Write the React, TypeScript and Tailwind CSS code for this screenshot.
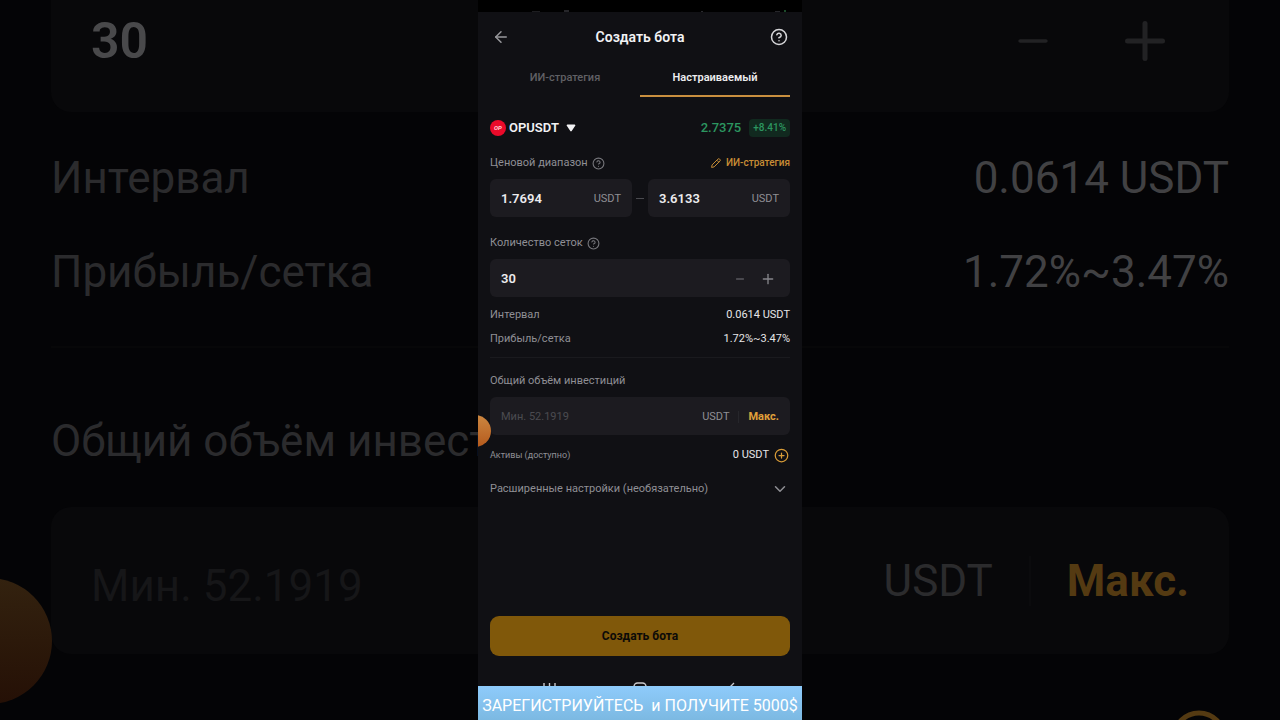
import { useState } from "react";
import type { ReactNode } from "react";
import {
  ArrowLeft,
  ChevronDown,
  CircleHelp,
  CirclePlus,
  Minus,
  Plus,
} from "lucide-react";

interface FieldProps {
  children: ReactNode;
}

const Field = ({ children }: FieldProps) => (
  <div className="flex h-[38px] min-w-0 flex-1 items-center rounded-md bg-[#1c1b20] px-[11px] pt-[2px]">
    {children}
  </div>
);

interface StatProps {
  label: string;
  value: string;
}

const Stat = ({ label, value }: StatProps) => (
  <div className="flex h-4 items-center justify-between">
    <dt className="text-[#8f8f94]">{label}</dt>
    <dd className="text-[#e6e6e8]">{value}</dd>
  </div>
);

const PencilIcon = () => (
  <svg viewBox="0 0 12 12" className="size-3" fill="none" stroke="currentColor">
    <path d="M1.6 10.4 2.1 7.9 7.9 2.1a1.2 1.2 0 0 1 1.7 0l.3.3a1.2 1.2 0 0 1 0 1.7L4.1 9.9Z" />
    <path d="m6.8 3.2 2 2" />
  </svg>
);

// Enlarged, dimmed copy of the form that fills the page behind the phone
const Backdrop = () => (
  <div
    aria-hidden="true"
    className="absolute inset-0 overflow-hidden px-[51px] text-[44px] leading-[56px] text-[#2b2b2d]"
  >
    <div className="flex h-[112px] items-center justify-between rounded-b-[20px] bg-[#08080a] px-10 pb-[30px]">
      <span className="text-[50px] font-semibold text-[#49494b]">30</span>
      <span className="flex items-center gap-[60px] pr-[14px] text-[#222224]">
        <Minus className="size-[44px]" strokeWidth={2} />
        <Plus className="size-[60px]" strokeWidth={2} />
      </span>
    </div>
    <div className="mt-[38px] flex justify-between">
      <span>Интервал</span>
      <span className="text-[#414143]">0.0614 USDT</span>
    </div>
    <div className="mt-[38px] flex justify-between">
      <span>Прибыль/сетка</span>
      <span className="text-[#414143]">1.72%~3.47%</span>
    </div>
    <div className="mt-[46px] h-[2px] bg-[#070708]" />
    <div className="mt-[65px]">Общий объём инвест</div>
    <div className="mt-[38px] flex h-[147px] items-center rounded-[20px] bg-[#08080a] px-10">
      <span className="flex-1 pt-[10px] text-[#161618]">Мин. 52.1919</span>
      <span>USDT</span>
      <span className="mx-9 h-[50px] w-[2px] bg-[#0b0b0d]" />
      <span className="font-bold text-[#543a12]">Макс.</span>
    </div>
    <div className="mt-[54px] flex justify-end">
      <CirclePlus className="size-[60px] text-[#543a12]" strokeWidth={2} />
    </div>
    <div className="absolute top-[578px] -left-[74px] size-[126px] rounded-full bg-linear-to-b from-[#33220f] to-[#251006]" />
  </div>
);

const StatusBar = () => (
  <div className="flex h-3 shrink-0 items-end bg-black">
    <svg viewBox="0 0 324 2" className="h-[2px] w-full">
      <rect x="54" y="1" width="8" height="1" fill="#1d1d20" />
      <rect x="86" y="0" width="5" height="2" fill="#26262a" />
      <rect x="223" y="1" width="2" height="1" fill="#2a2a2e" />
      <rect x="297" y="1" width="5" height="1" fill="#26262a" />
      <rect x="306" y="0" width="2" height="2" fill="#1c4a2a" />
    </svg>
  </div>
);

const SystemNav = () => (
  <div className="h-[30px] shrink-0 overflow-hidden pt-[26px] text-[#c9c9cc]">
    <svg
      viewBox="0 0 324 12"
      className="h-3 w-full"
      fill="none"
      stroke="currentColor"
      strokeWidth="1.4"
    >
      <path d="M66 1v10M71.500 1v10M77 1v10" />
      <rect x="156" y="1" width="12" height="11" rx="3.500" />
      <path d="m256 1-5 5 5 5" />
    </svg>
  </div>
);

const App = () => {
  const [lower, setLower] = useState("1.7694");
  const [upper, setUpper] = useState("3.6133");
  const [grids, setGrids] = useState("30");
  const [amount, setAmount] = useState("");

  const changeGrids = (step: number) => {
    setGrids(String(Math.max(2, Number(grids) + step)));
  };

  return (
    <div className="relative min-h-screen bg-[#040406] font-[Roboto,'Noto_Sans',sans-serif]">
      <Backdrop />
      <main className="relative mx-auto flex min-h-screen w-full max-w-[324px] flex-col overflow-hidden bg-[#101014] text-[11px] leading-4 text-[#8f8f94]">
        <StatusBar />

        <header className="flex h-[50px] items-center justify-between px-[14px]">
          <button aria-label="Назад" className="text-[#98989c]">
            <ArrowLeft className="size-[18px]" strokeWidth={2} />
          </button>
          <h1 className="text-sm font-semibold text-[#f2f2f4]">Создать бота</h1>
          <button aria-label="Помощь" className="text-[#d6d6d9]">
            <CircleHelp className="size-[18px]" strokeWidth={2} />
          </button>
        </header>

        <div role="tablist" className="flex h-[35px] px-3">
          <button
            role="tab"
            aria-selected="false"
            className="flex-1 border-b-2 border-transparent pb-px font-medium text-[#606065]"
          >
            ИИ-стратегия
          </button>
          <button
            role="tab"
            aria-selected="true"
            className="flex-1 border-b-2 border-[#c98f3f] pb-px font-semibold text-[#ececee]"
          >
            Настраиваемый
          </button>
        </div>

        <form
          className="flex flex-1 flex-col px-3 pt-[22px]"
          onSubmit={(e) => e.preventDefault()}
        >
          <div className="flex h-[18px] items-center justify-between">
            <button
              type="button"
              className="flex items-center text-[13px] font-semibold text-[#f2f2f4]"
            >
              <span className="mr-[3px] flex size-4 items-center justify-center rounded-full bg-[#ea0a2a] text-[6px] font-bold text-[#ffd5da] italic">
                OP
              </span>
              OPUSDT
              <svg viewBox="0 0 10 8" className="ml-[7px] h-2 w-[10px]">
                <path
                  d="M1.500.5h7a.8.8 0 0 1 .7 1.300L5.700 7a.9.9 0 0 1-1.400 0L.8 1.800A.8.8 0 0 1 1.500.5Z"
                  fill="currentColor"
                />
              </svg>
            </button>
            <div className="flex items-center gap-2 text-[#2c9660]">
              <span className="text-[13px] font-medium">2.7375</span>
              <span className="rounded bg-[#11291f] px-1 text-[10px] leading-[18px] font-medium">
                +8.41%
              </span>
            </div>
          </div>

          <div className="mt-[18px] flex h-4 items-center justify-between">
            <label htmlFor="lower" className="flex items-center gap-1">
              Ценовой диапазон
              <CircleHelp className="size-[13px] text-[#77777c]" strokeWidth={2} />
            </label>
            <button
              type="button"
              className="flex items-center gap-1 text-[10px] font-medium text-[#c88d35]"
            >
              <PencilIcon />
              ИИ-стратегия
            </button>
          </div>
          <div className="mt-2 flex items-center gap-1">
            <Field>
              <input
                id="lower"
                value={lower}
                onChange={(e) => setLower(e.target.value)}
                className="w-full min-w-0 text-[13px] font-semibold text-[#ececee] outline-none"
              />
              <span>USDT</span>
            </Field>
            <span className="h-px w-2 bg-[#4a4a4f]" />
            <Field>
              <input
                aria-label="Верхняя цена"
                value={upper}
                onChange={(e) => setUpper(e.target.value)}
                className="w-full min-w-0 text-[13px] font-semibold text-[#ececee] outline-none"
              />
              <span>USDT</span>
            </Field>
          </div>

          <label htmlFor="grids" className="mt-[18px] flex h-4 items-center gap-1">
            Количество сеток
            <CircleHelp className="size-[13px] text-[#77777c]" strokeWidth={2} />
          </label>
          <div className="mt-2 flex">
            <Field>
              <input
                id="grids"
                value={grids}
                onChange={(e) => setGrids(e.target.value)}
                className="w-full min-w-0 text-[13px] font-semibold text-[#ececee] outline-none"
              />
              <div className="flex items-center gap-[14px] pr-[3px]">
                <button
                  type="button"
                  aria-label="Меньше"
                  className="text-[#77777c]"
                  onClick={() => changeGrids(-1)}
                >
                  <Minus className="size-3" strokeWidth={2} />
                </button>
                <button
                  type="button"
                  aria-label="Больше"
                  className="text-[#85858a]"
                  onClick={() => changeGrids(1)}
                >
                  <Plus className="size-4" strokeWidth={2} />
                </button>
              </div>
            </Field>
          </div>

          <dl className="mt-[10px] flex flex-col gap-2">
            <Stat label="Интервал" value="0.0614 USDT" />
            <Stat label="Прибыль/сетка" value="1.72%~3.47%" />
          </dl>

          <hr className="mt-[10px] border-[#1a1a1e]" />

          <label htmlFor="amount" className="mt-[15px] h-4">
            Общий объём инвестиций
          </label>
          <div className="mt-2 flex">
            <Field>
              <input
                id="amount"
                value={amount}
                placeholder="Мин. 52.1919"
                onChange={(e) => setAmount(e.target.value)}
                className="w-full min-w-0 text-[#ececee] outline-none placeholder:text-[#4b4b50]"
              />
              <span>USDT</span>
              <span className="mx-[9px] h-3 w-px shrink-0 bg-[#26262b]" />
              <button type="button" className="font-bold text-[#e0a13a]">
                Макс.
              </button>
            </Field>
          </div>

          <div className="mt-3 flex h-4 items-center justify-between">
            <span className="text-[9px]">Активы (доступно)</span>
            <span className="flex items-center gap-[5px] pr-px text-[#e6e6e8]">
              0 USDT
              <button
                type="button"
                aria-label="Пополнить"
                className="text-[#d99c38]"
              >
                <CirclePlus className="size-[15px]" strokeWidth={2} />
              </button>
            </span>
          </div>

          <button
            type="button"
            className="mt-[18px] flex h-4 items-center justify-between pr-px"
          >
            Расширенные настройки (необязательно)
            <ChevronDown className="size-[18px]" strokeWidth={2} />
          </button>

          <button
            type="submit"
            className="mt-auto h-10 shrink-0 rounded-[9px] bg-[#80580a] text-xs font-bold text-[#0c0a08]"
          >
            Создать бота
          </button>
        </form>

        <SystemNav />

        <footer className="h-[34px] shrink-0 bg-linear-to-b from-[#8ecbfb] to-[#7cb9e2] text-center text-base leading-[40px] whitespace-pre text-white">
          ЗАРЕГИСТРИУЙТЕСЬ{"  "}и ПОЛУЧИТЕ 5000$
        </footer>

        <div className="absolute top-[415px] -left-[19px] size-8 rounded-full bg-linear-to-b from-[#cc8740] to-[#b55a1c]" />
      </main>
    </div>
  );
};

export default App;
